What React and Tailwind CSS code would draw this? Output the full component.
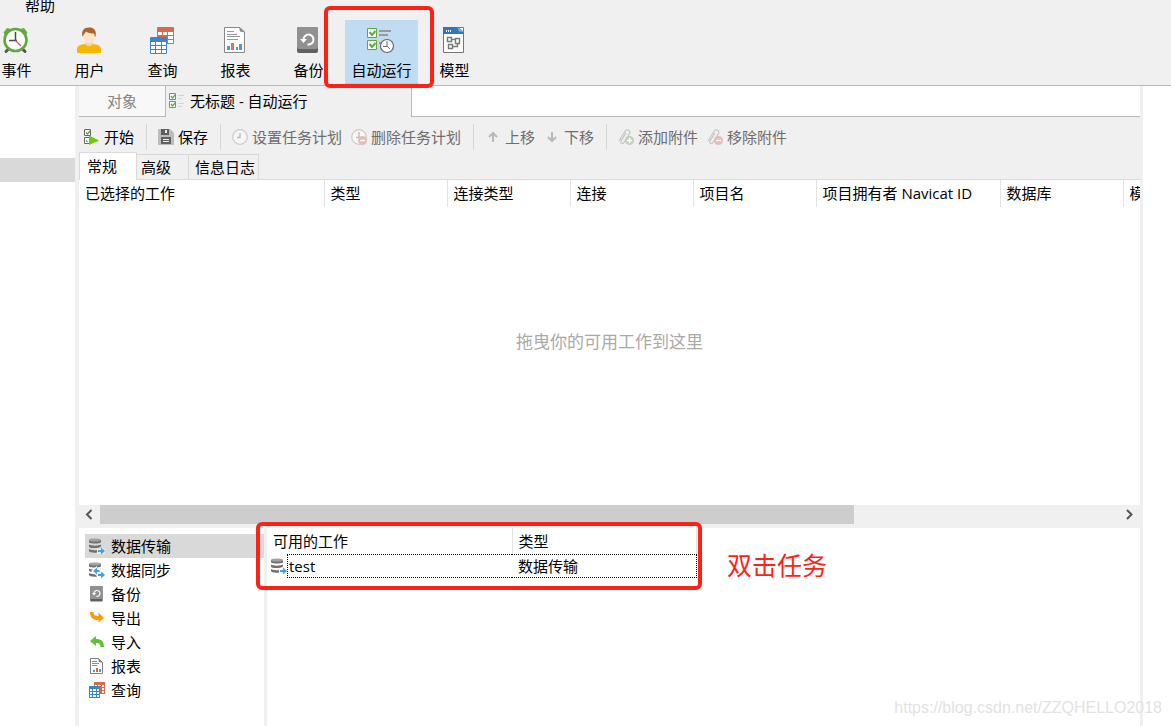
import React, { useState } from 'react';
import clsx from 'clsx';

const EventIcon = () => (
  <svg width="27" height="27" viewBox="0 0 27 27" fill="none">
    <path d="M0.5 5.5 L4 1 L8 2 L2 8Z M24.5 5.5 L21 1 L17 2 L23 8Z" fill="#6aab45" />
    <path d="M5 22.500l-2 2M20 22.500l2 2" stroke="#555" strokeWidth="3" strokeLinecap="round" />
    <circle cx="12.500" cy="13" r="11" fill="#fff" stroke="#5fa83a" strokeWidth="2.600" />
    <path d="M12.500 5v8.500M6 13.500h8" stroke="#4a4a4a" strokeWidth="1.500" />
    <path d="M12.500 13.500l5.500 5.500" stroke="#e0533a" strokeWidth="1.200" />
  </svg>
);

const UserIcon = () => (
  <svg width="27" height="27" viewBox="0 0 27 27" fill="none">
    <path d="M9 14h8v4l-4 3-4-3z" fill="#f3d0b4" />
    <path d="M1 26v-4c0-3 3-4.500 8-5 2 3 6 3 8 0 5 .5 8 2 8 5v4z" fill="#f8b704" />
    <ellipse cx="13" cy="9.500" rx="6" ry="7" fill="#fde3d0" />
    <path d="M6.500 10C5 3.500 8 0.500 13 0.500S21 3 19.500 10c-1-1-1-2.500-1.500-3.500-3 0-6-.5-8-2C9 6 7.500 7.500 6.500 10z" fill="#b0622b" />
  </svg>
);

const QueryIcon = () => (
  <svg width="27" height="27" viewBox="0 0 27 27" fill="none">
    <rect x="8" y="0" width="17" height="17" rx="1" fill="#d9694c" />
    <path d="M9 5h4v3H9zM14 5h4v3h-4zM19 5h5v3h-5zM19 9h5v3h-5zM19 13h5v3h-5z" fill="#fff" />
    <rect x="1" y="10" width="17" height="17" rx="1" fill="#3a87c6" />
    <path d="M2 15h4v3H2zM7 15h5v3H7zM13 15h4v3h-4zM2 19h4v3H2zM7 19h5v3H7zM13 19h4v3h-4zM2 23h4v3H2zM7 23h5v3H7zM13 23h4v3h-4z" fill="#fff" />
  </svg>
);

const QuerySmallIcon = () => (
  <svg width="16" height="16" viewBox="0 0 16 16" fill="none" className="shrink-0">
    <path d="M5 0h11v12H5z" fill="#d9694c" />
    <path d="M6 3h2v1H6zM9 3h3v1H9zM13 3h2v2h-2zM13 6h2v2h-2zM13 9h2v2h-2z" fill="#fff" />
    <path d="M0 4h11v12H0z" fill="#3a87c6" />
    <path d="M1 7h2v2H1zM4 7h3v2H4zM8 7h2v2H8zM1 10h2v2H1zM4 10h3v2H4zM8 10h2v2H8zM1 13h2v2H1zM4 13h3v2H4zM8 13h2v2H8z" fill="#fff" />
  </svg>
);

const ReportIcon = () => (
  <svg width="27" height="27" viewBox="0 0 27 27" fill="none">
    <path d="M2.500 0.500H18l4.500 4.500v20.500h-20z" fill="#fff" stroke="#888" />
    <path d="M17 0l6 5.500-5-1z" fill="#888" />
    <path d="M5 4.500h7M5 7.500h10M5 9.500h13M5 12.500h11" stroke="#999" />
    <path d="M5 19h3v4H5zM14 20h2v3h-2zM17 17h3v6h-3z" fill="#4c9bdc" />
    <path d="M9 16h3v7H9z" fill="#e86f51" />
  </svg>
);

const ReportSmallIcon = () => (
  <svg width="16" height="16" viewBox="0 0 16 16" fill="none" className="shrink-0">
    <path d="M1.500 0.500h8l4 4v11h-12z" fill="#fff" stroke="#808080" />
    <path d="M9 0l5 5-4-1z" fill="#808080" />
    <path d="M3 3.500h5M3 5.500h7M3 7.500h5" stroke="#909090" />
    <path d="M4 12h2v2H4zM10 11h2v3h-2z" fill="#4c9bdc" />
    <path d="M7 10h2v4H7z" fill="#e0603f" />
  </svg>
);

const BackupIcon = ({ size = 27 }) => (
  <svg width={size} height={size} viewBox="0 0 27 27" fill="none" className="shrink-0">
    <rect x="2" y="0" width="21" height="26" rx="2" fill="#616161" />
    <rect x="2" y="0" width="21" height="22" rx="2" fill="#919191" />
    <path d="M8.500 12.500a5 5 0 1 1 4 5" stroke="#fff" strokeWidth="2" />
    <path d="M5 12h7l-3.500 4z" fill="#fff" />
  </svg>
);

const AutomationIcon = () => (
  <svg width="27" height="27" viewBox="0 0 27 27" fill="none" className="overflow-visible">
    <path d="M-0.500 1.500h9v9h-9zM-0.500 13.500h9v9h-9z" fill="#fff" stroke="#5fa83a" />
    <path d="M1.500 5l2.500 3 3.500-4M1.500 17l2.500 3 3.500-4" stroke="#5fa83a" strokeWidth="2" />
    <path d="M11 4h12M11 8h9M11 16h4" stroke="#999" strokeWidth="2" />
    <circle cx="19" cy="19" r="6.500" fill="#fff" stroke="#666" strokeWidth="1.200" />
    <path d="M19 14v5.500h-4" stroke="#666" />
    <path d="M19 19l3 3" stroke="#e0533a" />
  </svg>
);

const ModelIcon = () => (
  <svg width="27" height="27" viewBox="0 0 27 27" fill="none">
    <path d="M2.500 0.500H22.500v25H2.500z" fill="#fff" stroke="#777" />
    <path d="M2 0h15l6 5v2H2z" fill="#2f78b5" />
    <path d="M16 0l7 5-5-.5z" fill="#6db4ea" />
    <path d="M5 3h1v2H5zM7 3h1v2H7zM9 3h1v2H9z" fill="#fff" />
    <path d="M6.500 10.500h4v4h-4zM14.500 11.500h4v5h-4zM7.500 17.500h4v4h-4z M10.500 12.500h4M16.500 16.500v3h-5" stroke="#777" strokeWidth="1.400" />
  </svg>
);

const TransferIcon = ({ sync }) => (
  <svg width="16" height="16" viewBox="0 0 16 16" fill="none" className="shrink-0">
    <path d="M0 2v2c0 2 12 2 12 0V2zM0 6.500v2c0 2 10 2 12 0v-2c-2 1.500-10 1.500-12 0zM0 11v2c0 1.500 5 2 8 1.500V12c-3 .5-7 0-8-1z" fill="#707070" />
    <ellipse cx="6" cy="2" rx="6" ry="1.600" fill="#a2a2a2" />
    {sync && (
      <>
        <path d="M2 9l6-5v3h4v4H8v3z" fill="#fff" />
        <path d="M4 9l4-3.500v2.500h2.500v2H8v2.500z" fill="#41a0ee" />
      </>
    )}
    <path d="M8 10.500h8V16H8z" fill="#fff" opacity="0.500" />
    <path d="M9 12h3V9.500L16 13l-4 3.500V14H9z" fill="#41a0ee" />
  </svg>
);

const ExportIcon = () => (
  <svg width="16" height="16" viewBox="0 0 16 16" fill="none">
    <path d="M1 2h3.500c0 3 1.500 4 5 4V2.500L15 8l-5.500 4.500V10C4 10 1 8 1 2z" fill="#fb9a0c" />
  </svg>
);

const ImportIcon = () => (
  <svg width="16" height="16" viewBox="0 0 16 16" fill="none">
    <path d="M1 7l6-5v3c5 0 8 2 8 8h-3.500c0-3-1-4-4.500-4v3z" fill="#60c230" />
  </svg>
);

const StartIcon = () => (
  <svg width="16" height="16" viewBox="0 0 16 16" fill="none">
    <path d="M0.500 0.500h6v6h-6zM0.500 8.500h6v6h-6z" fill="#fff" stroke="#666" />
    <path d="M2 3.500l1.500 1.500L6 2M2 11.500l1.500 1.500" stroke="#4ba53a" strokeWidth="1.200" />
    <path d="M5 6.500L15 11.500l-10 4.500z" fill="#6fc80e" />
  </svg>
);

const SaveIcon = () => (
  <svg width="16" height="16" viewBox="0 0 16 16" fill="none">
    <path d="M0 0h12l4 4v12H0z" fill="#bcbcbc" />
    <path d="M3 0h8v6H3zM3 8h10v7H3z" fill="#606060" />
    <path d="M7 1h2v3H7zM5 10h6v1H5zM5 12h6v1H5z" fill="#eee" />
  </svg>
);

const MinusBadge = () => (
  <>
    <circle cx="11.500" cy="11.500" r="4.500" fill="#e6bcb8" />
    <path d="M9 11.500h5" stroke="#fff" strokeWidth="1.400" />
  </>
);

const ScheduleIcon = ({ remove }) => (
  <svg width="16" height="16" viewBox="0 0 16 16" fill="none">
    <circle cx="8" cy="8" r="7.300" fill="#f6f6f6" stroke="#cbcbcb" strokeWidth="1.200" />
    <path d={remove ? 'M8 3v6M5 8.500h6' : 'M8 4v4.500H5'} stroke="#bdbdbd" strokeWidth="1.400" />
    {remove && <MinusBadge />}
  </svg>
);

const ArrowIcon = ({ down }) => (
  <svg width="16" height="16" viewBox="0 0 16 16" fill="none">
    <path
      d={down ? 'M8 3v9M4 8l4 4 4-4' : 'M8 13V4M4 8l4-4 4 4'}
      stroke="#b9b9b9"
      strokeWidth="2"
    />
  </svg>
);

const AttachmentIcon = ({ remove }) => (
  <svg width="16" height="16" viewBox="0 0 16 16" fill="none">
    <path
      d="M1 12L7 2.500c2-3 6-1 4.500 2L6 13.500c-1 2-4 1-3-1.500l5-8"
      stroke="#c4c4c4"
      strokeWidth="1.200"
    />
    {remove ? (
      <MinusBadge />
    ) : (
      <>
        <circle cx="11.500" cy="11.500" r="4.500" fill="#bfd3b8" />
        <path d="M9 11.500h5M11.500 9v5" stroke="#fff" strokeWidth="1.400" />
      </>
    )}
  </svg>
);

const TabIcon = () => (
  <svg width="16" height="16" viewBox="0 0 16 16" fill="none">
    <path d="M1.500 0.500h6v6h-6zM1.500 8.500h6v6h-6z" fill="#fff" stroke="#5fa83a" />
    <path d="M3 3l1.500 2L7.500 1.500M3 11l1.500 2L7.500 9.500" stroke="#5fa83a" strokeWidth="1.300" />
    <path d="M10 2.500h6M10 5.500h4M10 10.500h6M10 13.500h4" stroke="#d4d4d4" />
  </svg>
);

const mainTools = [
  { label: '事件', Icon: EventIcon },
  { label: '用户', Icon: UserIcon },
  { label: '查询', Icon: QueryIcon },
  { label: '报表', Icon: ReportIcon },
  { label: '备份', Icon: BackupIcon },
  { label: '自动运行', Icon: AutomationIcon, active: true },
  { label: '模型', Icon: ModelIcon },
];

const actionGroups = [
  [{ label: '开始', icon: <StartIcon /> }],
  [{ label: '保存', icon: <SaveIcon /> }],
  [
    { label: '设置任务计划', icon: <ScheduleIcon />, disabled: true },
    { label: '删除任务计划', icon: <ScheduleIcon remove />, disabled: true },
  ],
  [
    { label: '上移', icon: <ArrowIcon />, disabled: true },
    { label: '下移', icon: <ArrowIcon down />, disabled: true },
  ],
  [
    { label: '添加附件', icon: <AttachmentIcon />, disabled: true },
    { label: '移除附件', icon: <AttachmentIcon remove />, disabled: true },
  ],
];

const columns = [
  { label: '已选择的工作', width: 'w-[245px]' },
  { label: '类型', width: 'w-[123px]' },
  { label: '连接类型', width: 'w-[123px]' },
  { label: '连接', width: 'w-[123px]' },
  { label: '项目名', width: 'w-[123px]' },
  { label: '项目拥有者 Navicat ID', width: 'w-[184px]' },
  { label: '数据库', width: 'w-[123px]' },
  { label: '模式', width: 'w-[123px]' },
];

const jobTypes = [
  { label: '数据传输', icon: <TransferIcon /> },
  { label: '数据同步', icon: <TransferIcon sync /> },
  { label: '备份', icon: <BackupIcon size={16} /> },
  { label: '导出', icon: <ExportIcon /> },
  { label: '导入', icon: <ImportIcon /> },
  { label: '报表', icon: <ReportSmallIcon /> },
  { label: '查询', icon: <QuerySmallIcon /> },
];

const Header = () => (
  <header className="border-b border-[#b8b8b8] bg-[#f0f0f0]">
    <nav className="flex h-5 items-start pl-[25px]">
      <button type="button" className="leading-[10px]">帮助</button>
    </nav>
    <div className="-ml-5 flex">
      {mainTools.map(({ label, Icon, active }) => (
        <button
          key={label}
          type="button"
          className={clsx(
            'relative flex h-[65px] w-[73px] shrink-0 flex-col items-center gap-1.5 border-b-2 pt-[7px]',
            active ? 'z-10 border-[#a5cef0] bg-[#c0dcf3]' : 'border-transparent'
          )}
        >
          <Icon />
          <span className="whitespace-nowrap">{label}</span>
          {active && (
            <span className="pointer-events-none absolute -top-3.5 -right-4 -bottom-[5px] -left-[21px] rounded-md border-4 border-[#ff2116]" />
          )}
        </button>
      ))}
    </div>
  </header>
);

const DocumentTabs = () => (
  <div role="tablist" className="flex h-[31px]">
    <button
      type="button"
      role="tab"
      className="w-[87px] border-r border-b border-[#b8b8b8] bg-[#f8f8f8] text-[#838383]"
    >
      对象
    </button>
    <button
      type="button"
      role="tab"
      aria-selected="true"
      className="flex w-[245px] items-center gap-1.5 pb-px pl-[2px]"
    >
      <TabIcon />
      无标题 - 自动运行
    </button>
    <div className="flex-1 border-b border-l border-[#b8b8b8] bg-white" />
  </div>
);

const ActionBar = () => (
  <div className="flex pt-[7px] pb-[2px] pl-[5px]">
    {actionGroups.map((group, index) => (
      <div
        key={group[0].label}
        className={clsx(
          'flex h-[26px] items-center gap-[9px]',
          index < actionGroups.length - 1 && 'mr-[11px] border-r border-[#d6d6d6] pr-3'
        )}
      >
        {group.map(({ label, icon, disabled }) => (
          <button
            key={label}
            type="button"
            disabled={disabled}
            className="flex items-center gap-1 whitespace-nowrap disabled:text-[#6d6d6d]"
          >
            {icon}
            {label}
          </button>
        ))}
      </div>
    ))}
  </div>
);

const SettingTabs = () => (
  <div role="tablist" className="flex items-end">
    <button
      type="button"
      role="tab"
      aria-selected="true"
      className="h-7 w-[58px] border-t border-r border-l border-[#d9d9d9] bg-white pb-[2px] pl-[7px] text-left"
    >
      常规
    </button>
    <button
      type="button"
      role="tab"
      className="h-[26px] w-[52px] border-t border-r border-b border-[#d9d9d9] pl-1 text-left"
    >
      高级
    </button>
    <button
      type="button"
      role="tab"
      className="h-[26px] w-[70px] border-t border-r border-b border-[#d9d9d9] pl-1.5 text-left"
    >
      信息日志
    </button>
    <div className="flex-1 self-stretch border-b border-[#d9d9d9]" />
  </div>
);

const SelectedJobs = () => (
  <section className="flex flex-1 flex-col overflow-hidden bg-white">
    <table className="w-[1167px] table-fixed">
      <thead>
        <tr className="h-[27px]">
          {columns.map(({ label, width }) => (
            <th
              key={label}
              className={clsx(
                'border-r border-[#e2e2e2] pb-px pl-1.5 text-left font-normal whitespace-nowrap',
                width
              )}
            >
              {label}
            </th>
          ))}
        </tr>
      </thead>
    </table>
    <p className="flex flex-1 items-center justify-center pb-[28px] text-[17px] text-[#a9a9a9]">
      拖曳你的可用工作到这里
    </p>
  </section>
);

const ScrollBar = () => (
  <div className="flex h-[23px] items-start pb-1">
    <button type="button" aria-label="向左滚动" className="flex h-[19px] w-[21px] items-center justify-center">
      <svg width="9" height="11" viewBox="0 0 9 11" fill="none">
        <path d="M6.500 1L2 5.500 6.500 10" stroke="#555" strokeWidth="2" />
      </svg>
    </button>
    <div className="h-[19px] flex-1">
      <div className="h-full w-[74%] bg-[#cdcdcd]" />
    </div>
    <button type="button" aria-label="向右滚动" className="flex h-[19px] w-[21px] items-center justify-center">
      <svg width="9" height="11" viewBox="0 0 9 11" fill="none">
        <path d="M2 1l4.500 4.500L2 10" stroke="#555" strokeWidth="2" />
      </svg>
    </button>
  </div>
);

const JobTypeList = ({ selected, onSelect }) => (
  <ul className="w-[185px] shrink-0 pt-1.5 pl-1.5">
    {jobTypes.map(({ label, icon }) => (
      <li key={label}>
        <button
          type="button"
          onClick={() => onSelect(label)}
          className={clsx(
            'flex h-6 w-full items-center gap-1.5 pl-1',
            selected === label && 'bg-[#d9d9d9]'
          )}
        >
          {icon}
          {label}
        </button>
      </li>
    ))}
  </ul>
);

const AvailableJobs = () => (
  <section className="relative flex-1 border-l-3 border-[#f0f0f0]">
    <table className="w-[430px] table-fixed">
      <thead>
        <tr className="h-[26px]">
          <th className="w-[245px] border-r border-[#e2e2e2] pl-1.5 text-left font-normal">可用的工作</th>
          <th className="border-r border-[#e2e2e2] pl-1.5 text-left font-normal">类型</th>
        </tr>
      </thead>
      <tbody>
        <tr>
          <td className="p-0">
            <div className="flex items-center pl-1">
              <TransferIcon />
              <span className="flex h-6 flex-1 items-center border-y border-l border-dotted border-black pl-px">
                test
              </span>
            </div>
          </td>
          <td className="p-0">
            <div className="flex h-6 items-center border-y border-r border-dotted border-black pl-1.5">
              数据传输
            </div>
          </td>
        </tr>
      </tbody>
    </table>
    <div className="pointer-events-none absolute -top-1.5 -left-[11px] h-[68px] w-[446px] rounded-md border-4 border-[#ff2116]" />
    <p className="pointer-events-none absolute top-[21px] left-[460px] text-[25px] leading-8 text-[#ff2116]">
      双击任务
    </p>
  </section>
);

const App = () => {
  const [selected, setSelected] = useState('数据传输');

  return (
    <div className="relative flex min-h-screen flex-col overflow-hidden bg-white font-['Open_Sans','Noto_Sans_CJK_SC',sans-serif] text-[15px] leading-5 text-black">
      <Header />
      <div className="flex flex-1">
        <aside className="w-[75px] shrink-0 pt-[72px]">
          <div className="h-6 bg-[#d9d9d9]" />
        </aside>
        <main className="flex min-w-0 flex-1 flex-col bg-[#f0f0f0] pr-[3px] pl-1">
          <DocumentTabs />
          <ActionBar />
          <SettingTabs />
          <SelectedJobs />
          <ScrollBar />
          <div className="flex h-[198px] bg-white">
            <JobTypeList selected={selected} onSelect={setSelected} />
            <AvailableJobs />
          </div>
        </main>
        <aside className="w-7 shrink-0" />
      </div>
      <span className="pointer-events-none absolute right-[9px] bottom-2 font-['Liberation_Sans',Arial,sans-serif] text-base leading-5 text-[#e2e2e2]">
        https://blog.csdn.net/ZZQHELLO2018
      </span>
    </div>
  );
};

export default App;
